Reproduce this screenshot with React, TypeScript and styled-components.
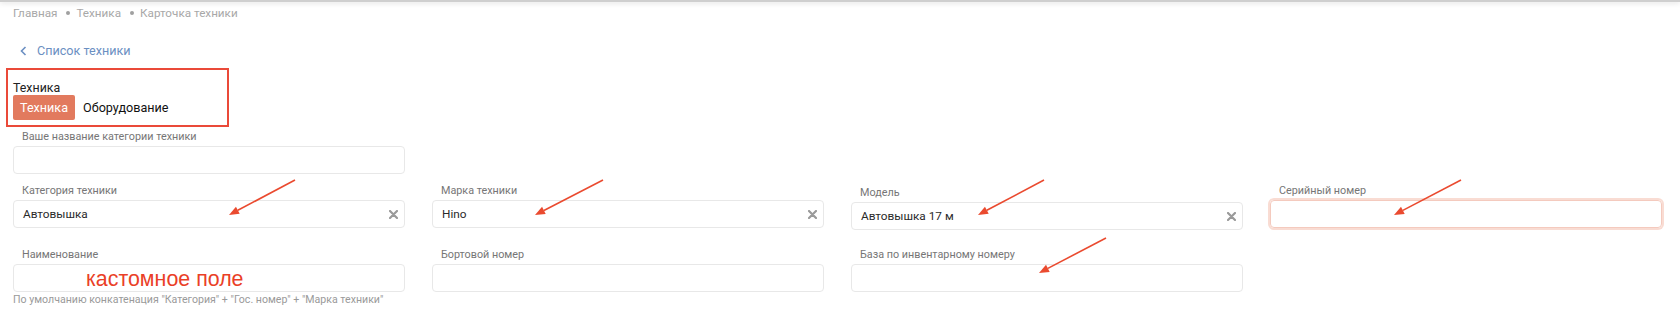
import React from "react";
import styled, { createGlobalStyle } from "styled-components";

const Global = createGlobalStyle`
  html, body { margin: 0; padding: 0; background: #fff; }
  body { font-family: Roboto, "Noto Sans", Arial, sans-serif; color: #222; }
  * { box-sizing: border-box; }
`;

const Page = styled.div`
  position: relative;
  width: 1680px;
  height: 322px;
  overflow: hidden;
  background: #fff;
`;

const TopBar = styled.div`
  height: 2px;
  background: #cfcfcf;
  box-shadow: 0 1px 5px rgba(0, 0, 0, 0.18);
`;

const Breadcrumbs = styled.nav`
  display: flex;
  align-items: center;
  gap: 9px;
  margin: 3px 0 0 13px;
  font-size: 11.7px;
  line-height: 16px;
  color: #a8a8a8;
`;

const Crumb = styled.span`
  display: flex;
  align-items: center;
  gap: 6px;
`;

const Dot = styled.span`
  width: 4px;
  height: 4px;
  border-radius: 50%;
  background: #a0a0a0;
`;

const BackLink = styled.a`
  display: flex;
  align-items: center;
  gap: 10px;
  margin: 22px 0 0 20px;
  font-size: 12.6px;
  line-height: 16px;
  color: #6b8fc2;
  text-decoration: none;
`;

const CategoryBox = styled.div`
  width: 223px;
  height: 59px;
  margin: 9px 0 0 6px;
  border: 2px solid #ea4a39;
  padding: 11px 0 0 5px;
  display: flex;
  flex-direction: column;
`;

const CategoryTitle = styled.div`
  font-size: 12.4px;
  line-height: 14px;
  color: #222;
`;

const Tabs = styled.div`
  display: flex;
  align-items: center;
  gap: 8px;
`;

const Tab = styled.button<{ $active?: boolean }>`
  height: 25px;
  padding: 0 ${(p) => (p.$active ? "7px" : "0")};
  border: none;
  border-radius: 2px;
  background: ${(p) => (p.$active ? "#e27a5e" : "transparent")};
  color: ${(p) => (p.$active ? "#fff" : "#111")};
  font-family: inherit;
  font-size: 12.6px;
  line-height: 25px;
`;

const Form = styled.div`
  padding-left: 13px;
`;

const Row = styled.div<{ $top: number }>`
  display: grid;
  grid-template-columns: repeat(4, 392px);
  column-gap: 27px;
  margin-top: ${(p) => p.$top}px;
`;

const Field = styled.div<{ $shift?: number }>`
  display: flex;
  flex-direction: column;
  margin-top: ${(p) => p.$shift || 0}px;
`;

const Label = styled.label`
  padding-left: 9px;
  margin-bottom: 1px;
  font-size: 10.8px;
  line-height: 16px;
  color: #767676;
`;

const InputBox = styled.div<{ $focus?: boolean }>`
  height: 28px;
  display: flex;
  align-items: center;
  justify-content: space-between;
  padding: 0 6px 0 9px;
  border: 1px solid ${(p) => (p.$focus ? "#f4cabe" : "#e8e8e8")};
  border-radius: 4px;
  box-shadow: ${(p) => (p.$focus ? "0 0 0 2px #f9dcd3" : "none")};
  font-size: 11.8px;
  color: #2a2a2a;
`;

const Hint = styled.div`
  margin-top: 1px;
  font-size: 10.6px;
  line-height: 14px;
  color: #9a9a9a;
  white-space: nowrap;
`;

const Annotations = styled.svg`
  position: absolute;
  left: 0;
  top: 0;
  pointer-events: none;
`;

const Note = styled.span`
  position: absolute;
  left: 86px;
  top: 267px;
  font-family: "Liberation Sans", Arial, sans-serif;
  font-size: 21.4px;
  line-height: 24px;
  color: #ea3f27;
`;

const ClearIcon = () => (
  <svg width="9" height="9" viewBox="0 0 9 9">
    <path d="M1 1L8 8M8 1L1 8" stroke="#9a9a9a" strokeWidth="2.2" strokeLinecap="round" />
  </svg>
);

const Chevron = () => (
  <svg width="7" height="10" viewBox="0 0 7 10">
    <path d="M5.5 1L1.5 5L5.5 9" stroke="#6b8fc2" strokeWidth="1.6" fill="none" />
  </svg>
);

type F = { label: string; value?: string; clear?: boolean; focus?: boolean; shift?: number };

const FormField = ({ label, value, clear, focus, shift }: F) => (
  <Field $shift={shift}>
    <Label>{label}</Label>
    <InputBox $focus={focus}>
      <span>{value}</span>
      {clear && <ClearIcon />}
    </InputBox>
  </Field>
);

const arrows: [number, number, number, number][] = [
  [295, 180, 229, 215],
  [603, 180, 535, 215],
  [1044, 180, 978, 215],
  [1461, 180, 1394, 215],
  [1106, 238, 1039, 273],
];

const Arrow = ({ a }: { a: [number, number, number, number] }) => {
  const [x1, y1, x2, y2] = a;
  const dx = x2 - x1;
  const dy = y2 - y1;
  const len = Math.hypot(dx, dy);
  const ux = dx / len;
  const uy = dy / len;
  const hl = 10;
  const hw = 4;
  const bx = x2 - ux * hl;
  const by = y2 - uy * hl;
  const px = -uy;
  const py = ux;
  return (
    <g>
      <line x1={x1} y1={y1} x2={bx} y2={by} stroke="#ea4a2f" strokeWidth="1.6" />
      <polygon
        points={`${x2},${y2} ${bx + px * hw},${by + py * hw} ${bx - px * hw},${by - py * hw}`}
        fill="#ea4a2f"
      />
    </g>
  );
};

export default function App() {
  return (
    <>
      <Global />
      <Page>
        <TopBar />
        <Breadcrumbs>
          <Crumb>Главная</Crumb>
          <Crumb>
            <Dot />
            Техника
          </Crumb>
          <Crumb>
            <Dot />
            Карточка техники
          </Crumb>
        </Breadcrumbs>
        <BackLink href="#">
          <Chevron />
          Список техники
        </BackLink>
        <CategoryBox>
          <CategoryTitle>Техника</CategoryTitle>
          <Tabs>
            <Tab $active>Техника</Tab>
            <Tab>Оборудование</Tab>
          </Tabs>
        </CategoryBox>
        <Form>
          <Row $top={2}>
            <FormField label="Ваше название категории техники" />
          </Row>
          <Row $top={9}>
            <FormField label="Категория техники" value="Автовышка" clear />
            <FormField label="Марка техники" value="Hino" clear />
            <FormField label="Модель" value="Автовышка 17 м" clear shift={2} />
            <FormField label="Серийный номер" focus />
          </Row>
          <Row $top={17}>
            <div>
              <FormField label="Наименование" />
              <Hint>По умолчанию конкатенация "Категория" + "Гос. номер" + "Марка техники"</Hint>
            </div>
            <FormField label="Бортовой номер" />
            <FormField label="База по инвентарному номеру" />
          </Row>
        </Form>
        <Note>кастомное поле</Note>
        <Annotations width="1680" height="322" viewBox="0 0 1680 322">
          {arrows.map((a, i) => (
            <Arrow key={i} a={a} />
          ))}
        </Annotations>
      </Page>
    </>
  );
}
